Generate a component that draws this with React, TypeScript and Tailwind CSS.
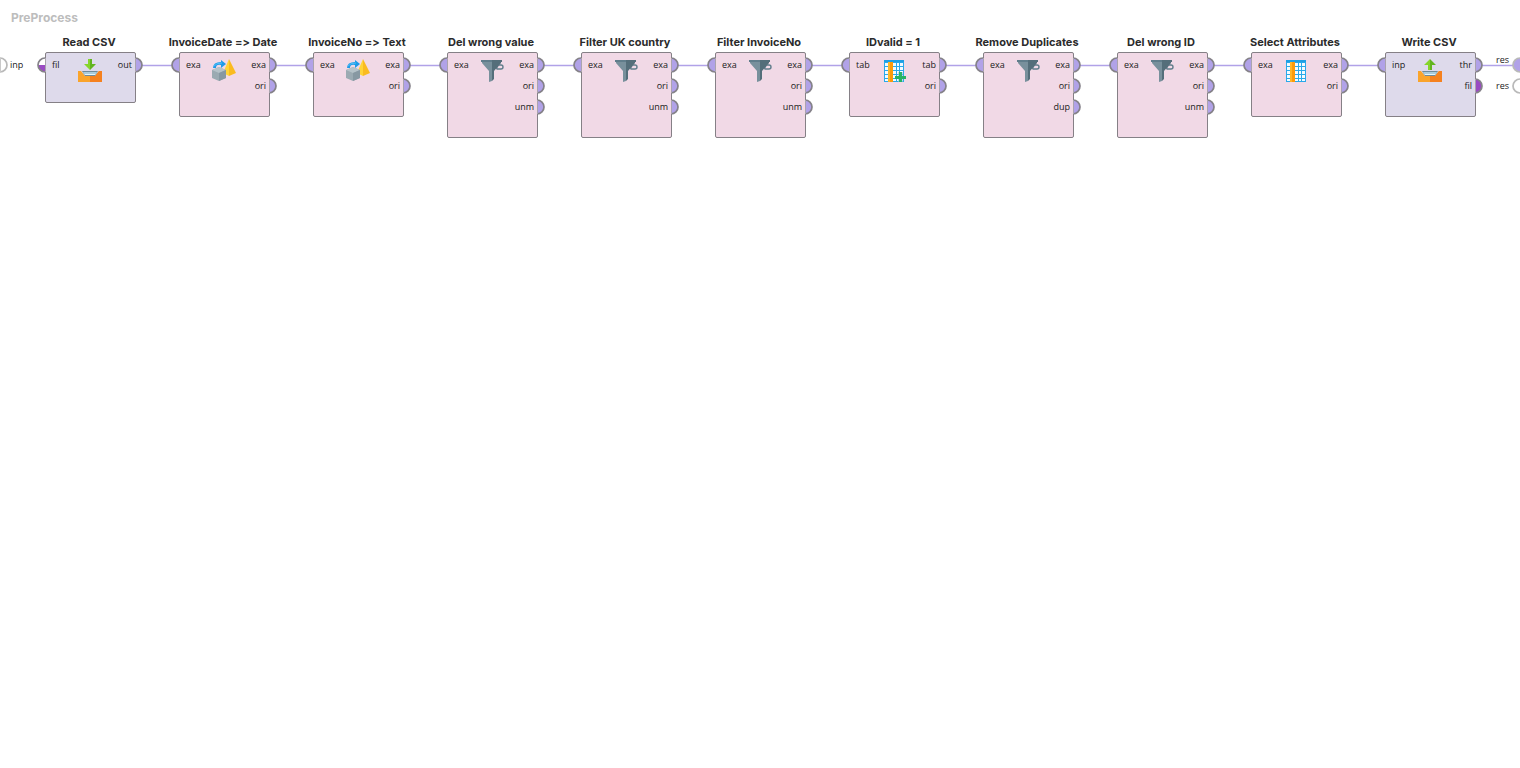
type IconKind = "read" | "write" | "convert" | "filter" | "table" | "tableAdd";
type Fill = "lilac" | "purple" | "half" | "empty";

interface OperatorNode {
  title: string;
  icon: IconKind;
  input: string;
  outputs: string[];
  io?: boolean;
}

const operators: OperatorNode[] = [
  { title: "Read CSV", icon: "read", input: "fil", outputs: ["out"], io: true },
  { title: "InvoiceDate => Date", icon: "convert", input: "exa", outputs: ["exa", "ori"] },
  { title: "InvoiceNo => Text", icon: "convert", input: "exa", outputs: ["exa", "ori"] },
  { title: "Del wrong value", icon: "filter", input: "exa", outputs: ["exa", "ori", "unm"] },
  { title: "Filter UK country", icon: "filter", input: "exa", outputs: ["exa", "ori", "unm"] },
  { title: "Filter InvoiceNo", icon: "filter", input: "exa", outputs: ["exa", "ori", "unm"] },
  { title: "IDvalid = 1", icon: "tableAdd", input: "tab", outputs: ["tab", "ori"] },
  { title: "Remove Duplicates", icon: "filter", input: "exa", outputs: ["exa", "ori", "dup"] },
  { title: "Del wrong ID", icon: "filter", input: "exa", outputs: ["exa", "ori", "unm"] },
  { title: "Select Attributes", icon: "table", input: "exa", outputs: ["exa", "ori"] },
  { title: "Write CSV", icon: "write", input: "inp", outputs: ["thr", "fil"], io: true },
];

const FIRST_X = 45;
const PITCH = 134;

function Tray() {
  return (
    <>
      <path d="M0 12h3l4 5h10l4-5h3v11H0z" fill="#faa42b" />
      <path d="M12 17h5l4-5h3v11H12z" fill="#f5811f" />
      <path d="M4 12h16l-3 5H7z" fill="#6f8b9b" />
      <path d="M5 13h14l-1 2H6z" fill="#a9cbdc" />
      <path d="M6 15h12l-1 1H7z" fill="#e4f4fb" />
    </>
  );
}

function Grid() {
  return (
    <>
      <path d="M2 1h20v22H2z" fill="#29a9ea" />
      <path d="M2 1h20v2H2z" fill="#1e9fe4" />
      <path
        d="M3 4h3v3H3zM11 4h3v3h-3zM15 4h2v3h-2zM18 4h3v3h-3zM3 8h3v3H3zM11 8h3v3h-3zM15 8h2v3h-2zM18 8h3v3h-3zM3 12h3v3H3zM11 12h3v3h-3zM15 12h2v3h-2zM18 12h3v3h-3zM3 16h3v3H3zM11 16h3v3h-3zM15 16h2v3h-2zM18 16h3v3h-3zM3 20h3v2H3zM11 20h3v2h-3zM15 20h2v2h-2zM18 20h3v2h-3z"
        fill="#f2fbff"
      />
      <path d="M6 3h2v20H6z" fill="#ffb527" />
      <path d="M8 3h3v20H8z" fill="#fb9a0b" />
    </>
  );
}

function OperatorIcon({ kind }: { kind: IconKind }) {
  return (
    <svg width="24" height="24" viewBox="0 0 24 24" aria-hidden="true" className="shrink-0">
      {kind === "read" && (
        <>
          <Tray />
          <path d="M10 0h2v11L6 5h4z" fill="#86d52b" />
          <path d="M12 0h2v5h4l-6 6z" fill="#62b51f" />
        </>
      )}
      {kind === "write" && (
        <>
          <Tray />
          <path d="M12 0v11h-2V6H6z" fill="#86d52b" />
          <path d="M12 0l6 6h-4v5h-2z" fill="#62b51f" />
        </>
      )}
      {kind === "convert" && (
        <>
          <path d="M17 0l-6 14 6 3z" fill="#ffd438" />
          <path d="M17 0l7 14-7 3z" fill="#fabb20" />
          <path d="M0 11l7-3 7 3v8l-7 3-7-3z" fill="#9baab2" />
          <path d="M0 11l7-3 7 3-7 3z" fill="#b5c2c8" />
          <path d="M7 14l7-3v8l-7 3z" fill="#8798a2" />
          <path d="M1 9Q1 3 9 3V1l5 4-5 4V6Q4 5 4 9z" fill="#1e9be8" />
          <path d="M2 7Q4 4 10 4" fill="none" stroke="#4fc0f8" strokeWidth="1" />
        </>
      )}
      {kind === "filter" && (
        <>
          <path d="M18 6H21Q23 6 23 8Q23 10 21 10H17Q16 9 18 7" fill="none" stroke="#607d8b" strokeWidth="1.4" />
          <path d="M2 3h10v19l-3 1V12L2 4z" fill="#78909c" />
          <path d="M12 3h9v1l-7 8v8l-2 2z" fill="#546e7a" />
          <path d="M1 1h11v2H1z" fill="#607d8b" />
          <path d="M12 1h10v2H12z" fill="#546e7a" />
        </>
      )}
      {kind === "table" && <Grid />}
      {kind === "tableAdd" && (
        <>
          <Grid />
          <path d="M16 13h5v10h-5z" fill="#94c8dd" opacity="0.6" />
          <path d="M17 13h3v4h4v3h-4v3h-3v-3h-4v-3h4z" fill="#27b363" />
        </>
      )}
    </svg>
  );
}

function Port({ side, fill, outer = false }: { side: "left" | "right"; fill: Fill; outer?: boolean }) {
  const shape = side === "left" ? "M9 1A7 7 0 0 0 9 15Z" : "M1 1A7 7 0 0 1 1 15Z";
  const arc = side === "left" ? "M9 1A7 7 0 0 0 9 15" : "M1 1A7 7 0 0 1 1 15";
  const color = fill === "lilac" ? "#b1a2e8" : fill === "purple" ? "#9a4bc3" : "#ffffff";
  return (
    <svg width="10" height="16" viewBox="0 0 10 16" aria-hidden="true" className="block shrink-0">
      <path d={shape} fill={color} />
      {fill === "half" && <path d="M2 8h7v7A7 7 0 0 1 2 8" fill="#9a4bc3" />}
      <path d={arc} fill="none" stroke={outer ? "#b9b9b9" : "#858289"} strokeWidth="1.7" />
      {(!outer || side === "right") && (
        <path
          d={side === "left" ? "M9.500 1v14" : "M1.500 1v14"}
          stroke={outer ? "#c9c9c9" : "#aaa4ae"}
          strokeWidth="1"
        />
      )}
    </svg>
  );
}

function Operator({ node, index }: { node: OperatorNode; index: number }) {
  return (
    <section
      className="absolute top-[34px] flex w-[91px] flex-col items-center"
      style={{ left: FIRST_X + index * PITCH }}
    >
      <h2 className="mr-[3px] h-[18px] font-['Inter',sans-serif] text-[11px] leading-4 font-bold whitespace-nowrap text-[#2b2b2b] [font-feature-settings:'calt'_0]">
        {node.title}
      </h2>
      <div
        className={`relative flex w-full justify-between rounded-[2px] border border-[#858086] px-[6px] pt-[2px] ${
          node.io ? "bg-[#dedaeb]" : "bg-[#f1d9e6]"
        } ${node.outputs.length === 1 ? "pb-[26px]" : "pb-[19px]"}`}
      >
        <span className="h-[21px] w-5 leading-5">{node.input}</span>
        <div className="absolute top-[4px] left-[-10px]">
          <Port side="left" fill={index === 0 ? "half" : "lilac"} />
        </div>
        <div className="absolute top-[6px] left-8">
          <OperatorIcon kind={node.icon} />
        </div>
        <ul className="-mr-[3px] text-right">
          {node.outputs.map((name) => (
            <li key={name} className="h-[21px] leading-5">
              {name}
            </li>
          ))}
        </ul>
        <div className="absolute top-[4px] right-[-9px] flex flex-col gap-[5px]">
          {node.outputs.map((name) => (
            <Port key={name} side="right" fill={node.io && name === "fil" ? "purple" : "lilac"} />
          ))}
        </div>
      </div>
    </section>
  );
}

export default function App() {
  return (
    <main className="relative min-h-screen w-full overflow-hidden bg-white font-['Open_Sans',sans-serif] text-[9px] text-[#202020]">
      <h1 className="px-[11px] pt-[9px] font-['Inter',sans-serif] text-[12px] leading-[18px] font-bold text-[#bdbdbd]">
        PreProcess
      </h1>
      <svg width="1520" height="3" viewBox="0 0 1520 3" aria-hidden="true" className="absolute top-16 left-0">
        {operators.map((node, i) => {
          const start = FIRST_X + i * PITCH + 96;
          return <path key={node.title} d={`M${start} 1.500H${start + 33}`} stroke="#b1a2e8" strokeWidth="1.4" />;
        })}
      </svg>
      <div className="absolute top-[57px] left-[-1px] flex items-center gap-px">
        <Port side="right" fill="empty" outer />
        <span className="leading-4">inp</span>
      </div>
      {operators.map((node, i) => (
        <Operator key={node.title} node={node} index={i} />
      ))}
      <div className="absolute top-[53px] left-[1496px] flex gap-[2px]">
        <span className="leading-[14px]">res</span>
        <div className="pt-1">
          <Port side="left" fill="lilac" outer />
        </div>
      </div>
      <div className="absolute top-[78px] left-[1496px] flex gap-[2px]">
        <span className="leading-4">res</span>
        <Port side="left" fill="empty" outer />
      </div>
    </main>
  );
}
